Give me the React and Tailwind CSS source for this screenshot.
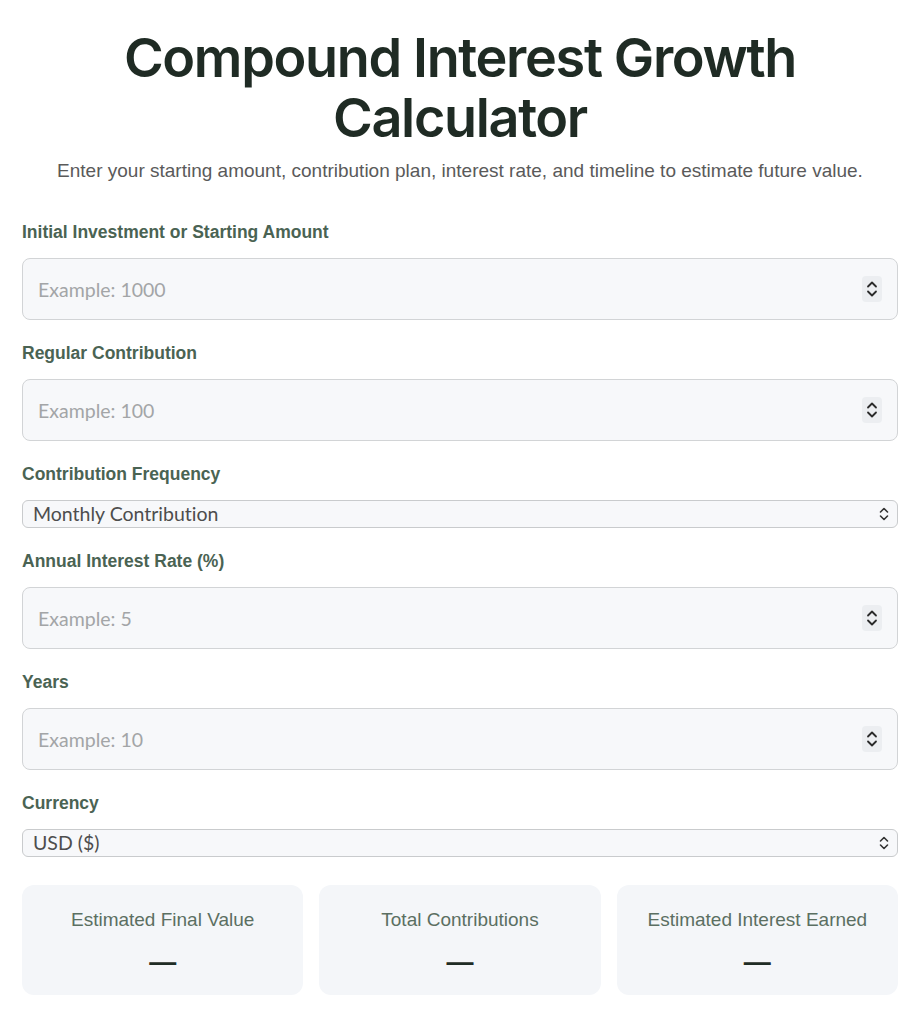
import React from "react";

const Spinner = () => (
  <span className="pointer-events-none absolute right-[16px] top-1/2 flex h-[26px] w-[20px] -translate-y-1/2 items-center justify-center rounded-[4px] bg-[#eceef1]">
    <svg width="12" height="20" viewBox="0 0 12 20" fill="none" stroke="#2b2b2b" strokeWidth="1.8" strokeLinecap="round" strokeLinejoin="round">
      <path d="M2 7.5 L6 3.5 L10 7.5" />
      <path d="M2 12.5 L6 16.5 L10 12.5" />
    </svg>
  </span>
);

const SelectChevron = () => (
  <span className="pointer-events-none absolute right-[9px] top-1/2 -translate-y-1/2">
    <svg width="10" height="16" viewBox="0 0 10 16" fill="none" stroke="#333" strokeWidth="1.6" strokeLinecap="round" strokeLinejoin="round">
      <path d="M1.5 6 L5 2.5 L8.5 6" />
      <path d="M1.5 10 L5 13.5 L8.5 10" />
    </svg>
  </span>
);

function Label({ children }) {
  return (
    <label className="block text-[17.5px] font-bold leading-[20px] text-[#4a6353] [font-family:'Liberation_Sans',Arial,sans-serif]">
      {children}
    </label>
  );
}

function NumberField({ label, placeholder }) {
  return (
    <div className="flex flex-col gap-[16px]">
      <Label>{label}</Label>
      <div className="relative">
        <input
          type="text"
          placeholder={placeholder}
          className="h-[62px] w-full rounded-[8px] border-[1.5px] border-[#d2d4d6] bg-[#f7f8fa] px-[15px] text-[19.5px] text-[#333] outline-none placeholder:text-[#a3a5a7] [font-family:Lato,sans-serif]"
        />
        <Spinner />
      </div>
    </div>
  );
}

function SelectField({ label, value }) {
  return (
    <div className="flex flex-col gap-[16px]">
      <Label>{label}</Label>
      <div className="relative">
        <div className="flex h-[28px] w-full items-center rounded-[6px] border border-[#c9cbcd] bg-[#f7f8fa] px-[10px] text-[19.5px] text-[#4d4d4d] [font-variant-ligatures:none] [font-family:Lato,sans-serif]">
          {value}
        </div>
        <SelectChevron />
      </div>
    </div>
  );
}

function ResultCard({ title }) {
  return (
    <div className="flex h-[110px] flex-col items-center rounded-[12px] bg-[#f4f6f9] pt-[24px]">
      <div className="text-[19px] leading-[22px] text-[#5b6f62] [font-family:'Liberation_Sans',Arial,sans-serif]">{title}</div>
      <div className="mt-[16px] text-[27px] font-bold leading-[30px] text-[#1f2d26] [font-family:'Liberation_Sans',Arial,sans-serif]">—</div>
    </div>
  );
}

export default function App() {
  return (
    <div className="min-h-screen bg-white px-[22px] pb-[30px]">
      <header className="pt-[28px] text-center">
        <h1 className="text-[54px] font-semibold leading-[60px] tracking-[-0.025em] text-[#1f2b24] [font-family:Inter,sans-serif]">
          Compound Interest Growth
          <br />
          Calculator
        </h1>
        <p className="mt-[12px] text-[19px] leading-[22px] text-[#5a5a5a] [font-family:'Liberation_Sans',Arial,sans-serif]">
          Enter your starting amount, contribution plan, interest rate, and timeline to estimate future value.
        </p>
      </header>

      <form className="mt-[40px] flex flex-col gap-[23px]">
        <NumberField label="Initial Investment or Starting Amount" placeholder="Example: 1000" />
        <NumberField label="Regular Contribution" placeholder="Example: 100" />
        <SelectField label="Contribution Frequency" value="Monthly Contribution" />
        <NumberField label="Annual Interest Rate (%)" placeholder="Example: 5" />
        <NumberField label="Years" placeholder="Example: 10" />
        <SelectField label="Currency" value="USD ($)" />
      </form>

      <section className="mt-[28px] grid grid-cols-3 gap-[16px]">
        <ResultCard title="Estimated Final Value" />
        <ResultCard title="Total Contributions" />
        <ResultCard title="Estimated Interest Earned" />
      </section>
    </div>
  );
}
